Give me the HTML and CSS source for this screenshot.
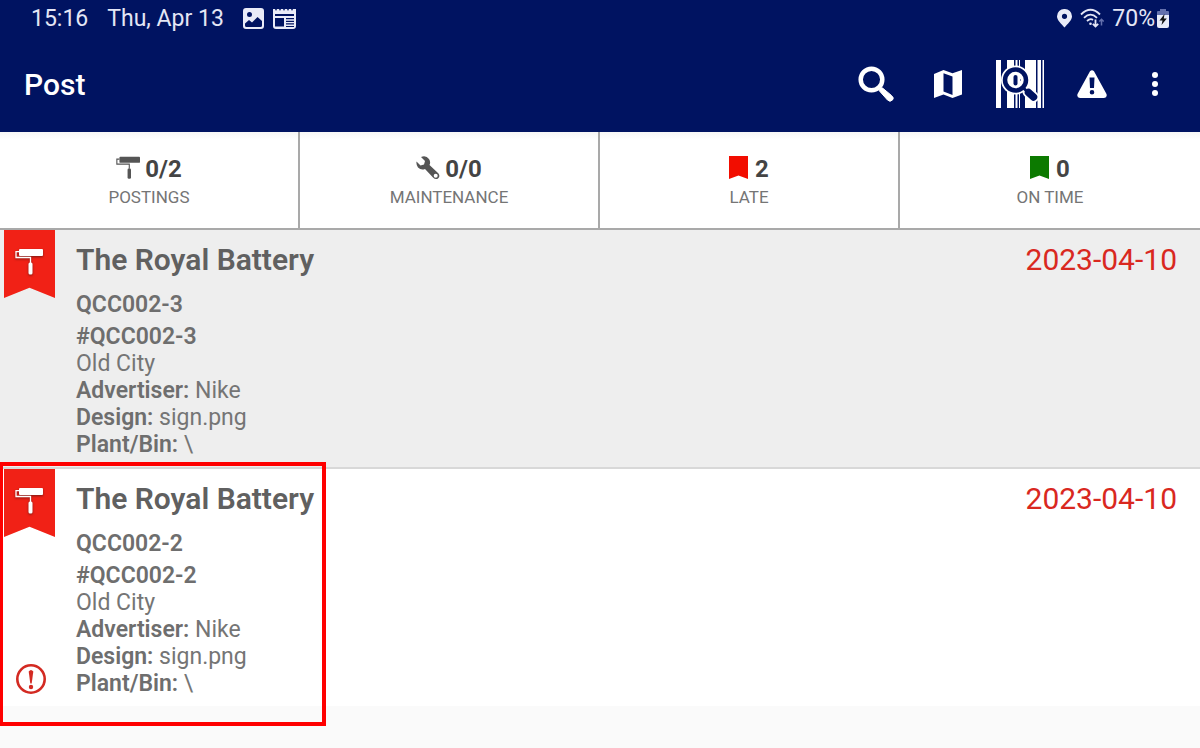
FILE: index.html
```html
<!DOCTYPE html>
<html lang="en">
<head>
    <meta charset="UTF-8">
    <meta name="viewport" content="width=device-width, initial-scale=1.0">
    <title>Post</title>
    <link rel="stylesheet" href="styles.css">
</head>
<body>

    <!-- Shared icons -->
    <svg class="sprite" aria-hidden="true">
        <symbol id="roller" viewBox="0 0 28 28">
            <rect x="4" y="1" width="24" height="7" rx="1"/>
            <path d="M4 3.700H1V9.500H15.500V15" fill="none" stroke="currentColor" stroke-width="1.300"/>
            <rect x="13.500" y="14.500" width="4" height="12" rx="1.500"/>
        </symbol>
        <symbol id="flag" viewBox="0 0 19 23">
            <path d="M0 0H19V23L9.500 19.500L0 23Z"/>
        </symbol>
    </svg>

    <header>
        <div class="status-bar">
            <div class="status-left">
                <span>15:16</span>
                <span>Thu, Apr 13</span>
                <svg class="status-icon" width="21" height="21" viewBox="0 0 21 21">
                    <path fill-rule="evenodd" d="M3 0H18Q21 0 21 3V18Q21 21 18 21H3Q0 21 0 18V3Q0 0 3 0ZM6.500 4A2.500 2.500 0 1 0 6.500 9A2.500 2.500 0 1 0 6.500 4ZM2 17.500Q2 19 3.500 19H17.500Q19 19 19 17.500V13L14.500 9L9 14.500L6 12L2 15.500Z"/>
                </svg>
                <svg class="status-icon" width="23" height="21" viewBox="0 0 23 21">
                    <path fill-rule="evenodd" d="M0 1H2L3 3L4 1H6L7 3L8 1H10L11 3L12 1H14L15 3L16 1H18L19 3L20 1H23V18Q23 21 20 21H3Q0 21 0 18ZM2 6V8H21V6ZM2 10V18.500H11V10ZM13 10V11.300H21V10ZM13 12.700V14H21V12.700ZM13 15.300V16.600H21V15.300ZM13 18V19H21V18Z"/>
                </svg>
            </div>
            <div class="status-right">
                <svg class="status-icon" width="15" height="19" viewBox="0 0 15 19">
                    <path fill-rule="evenodd" d="M7.500 0A7.300 7.300 0 0 1 15 7.300C15 11.500 10.500 15 7.500 18.500C4.500 15 0 11.500 0 7.300A7.300 7.300 0 0 1 7.500 0ZM7.500 4.700A2.600 2.600 0 1 0 7.500 9.900A2.600 2.600 0 1 0 7.500 4.700Z"/>
                </svg>
                <svg width="24" height="20" viewBox="0 0 24 20" fill="none" stroke="#e4e6f5" stroke-width="1.800">
                    <path d="M1 6.500Q10.500 -3 20 6.500M4 9.800Q10.500 3.500 17 9.800M7 13Q10.500 10 13 12"/>
                    <circle cx="10.500" cy="15.800" r="1.300" fill="#e4e6f5" stroke="none"/>
                    <path d="M15.500 11.500V18.500M12.800 15.800L15.500 18.500L18.200 15.800"/>
                    <path d="M21.500 17.500V11.500M19.300 13.500L21.500 11.300L23.700 13.500" stroke="#6470ad" stroke-width="1.500"/>
                </svg>
                <span>70%</span>
                <svg width="12" height="19" viewBox="0 0 12 19">
                    <path d="M3 0H9V2H11Q12 2 12 3V8H0V3Q0 2 1 2H3Z" fill="#6470ad"/>
                    <path d="M0 6H12V17Q12 19 10 19H2Q0 19 0 17Z" fill="#e9ebf8"/>
                    <path d="M7.500 5L2.500 11.500H5.500L4.500 16L9.800 9.500H6.800Z" fill="#111"/>
                </svg>
            </div>
        </div>

        <div class="app-bar">
            <h1>Post</h1>
            <nav class="actions">
                <button type="button" aria-label="Search">
                    <svg width="36" height="36" viewBox="0 0 36 36">
                        <circle cx="13.500" cy="13.500" r="10.800" fill="none" stroke="#fff" stroke-width="4.500"/>
                        <path d="M21.500 25Q21.500 22 24.500 22L33.500 29.500Q36.500 32 34.500 34Q32 36.500 29.500 34Z" fill="#fff" stroke="#fff"/>
                        <path d="M20 20L24 24" stroke="#fff" stroke-width="3"/>
                    </svg>
                </button>
                <button type="button" aria-label="Map">
                    <svg width="28" height="28" viewBox="0 0 28 28">
                        <path fill="#fff" fill-rule="evenodd" d="M0 4L9.500 0L18.500 3.200L28 0V24.500L18.500 28L9.500 24.500L0 28ZM9.500 3.200V21.500L18.500 25V6.500Z"/>
                    </svg>
                </button>
                <button type="button" aria-label="Scan barcode">
                    <svg width="48" height="48" viewBox="0 0 48 48">
                        <path fill="#fff" d="M0 0H5V48H0ZM11 0H18V48H11ZM19.500 0H21.500V48H19.500ZM23 0H24V48H23ZM29 0H40V48H29ZM41.500 0H45V48H41.500ZM46.500 0H48V48H46.500Z"/>
                        <path d="M32 32L37.500 37" stroke="#fff" stroke-width="11" stroke-linecap="round"/>
                        <circle cx="19.500" cy="20" r="14.500" fill="#fff"/>
                        <circle cx="19.500" cy="20" r="10.500" fill="#fff" stroke="#001361" stroke-width="4.500"/>
                        <path d="M27 27.500L32 32.500" stroke="#001361" stroke-width="3"/>
                        <path d="M32.500 32.500L37.500 37" stroke="#001361" stroke-width="7.500" stroke-linecap="round"/>
                        <rect x="17.500" y="15" width="4" height="10.500" rx="2" fill="#001361"/>
                        <path d="M24.500 19V21" stroke="#8890b8" stroke-width="1"/>
                    </svg>
                </button>
                <button type="button" aria-label="Alerts">
                    <svg width="30" height="28" viewBox="0 0 30 28">
                        <path fill="#fff" fill-rule="evenodd" d="M13 1.300Q15 -1 17 1.300L29.500 24Q30.500 27.500 27 28H3Q-.5 27.500 .5 24ZM12.500 7.500L13 18H17L17.500 7.500ZM15 20A2.300 2.300 0 1 0 15 24.600A2.300 2.300 0 1 0 15 20Z"/>
                    </svg>
                </button>
                <button type="button" class="more" aria-label="More options">
                    <svg width="6" height="24" viewBox="0 0 6 24" fill="#fff">
                        <circle cx="3" cy="3" r="3"/>
                        <circle cx="3" cy="12" r="3"/>
                        <circle cx="3" cy="21" r="3"/>
                    </svg>
                </button>
            </nav>
        </div>
    </header>

    <!-- Totals -->
    <section class="stats">
        <div class="stat">
            <p class="count"><svg width="24" height="24"><use href="#roller"/></svg>0/2</p>
            <p class="label">POSTINGS</p>
        </div>
        <div class="stat">
            <p class="count">
                <svg width="24" height="24" viewBox="0 0 24 24">
                    <path fill-rule="evenodd" d="M5 1Q10 -1 13 3Q15 6 13.500 9L22.500 17.500Q24.500 20.500 22 22.500Q19.500 24 17 21.500L9 13Q5 14.500 2 11.500Q0 9 .5 5.500L4.500 9.500L8 8.500L9 5ZM19.700 17.800A2 2 0 1 0 19.700 21.800A2 2 0 1 0 19.700 17.800Z"/>
                </svg>0/0
            </p>
            <p class="label">MAINTENANCE</p>
        </div>
        <div class="stat">
            <p class="count flagged"><svg class="late" width="19" height="23"><use href="#flag"/></svg>2</p>
            <p class="label">LATE</p>
        </div>
        <div class="stat">
            <p class="count flagged"><svg class="on-time" width="19" height="23"><use href="#flag"/></svg>0</p>
            <p class="label">ON TIME</p>
        </div>
    </section>

    <!-- Work orders -->
    <main>
        <article class="order shaded">
            <div class="side">
                <div class="ribbon"><svg width="28" height="28"><use href="#roller"/></svg></div>
            </div>
            <div class="info">
                <div class="title-row">
                    <h2>The Royal Battery</h2>
                    <time datetime="2023-04-10">2023-04-10</time>
                </div>
                <p class="code"><b>QCC002-3</b></p>
                <p><b>#QCC002-3</b></p>
                <p>Old City</p>
                <p><b>Advertiser:</b> Nike</p>
                <p><b>Design:</b> sign.png</p>
                <p><b>Plant/Bin:</b> \</p>
            </div>
        </article>

        <article class="order">
            <div class="side">
                <div class="ribbon"><svg width="28" height="28"><use href="#roller"/></svg></div>
                <svg class="alert" width="30" height="30" viewBox="0 0 30 30">
                    <circle cx="15" cy="15" r="13.700" fill="none" stroke="#d32a22" stroke-width="2.600"/>
                    <path d="M12.700 7.500Q15 4.500 17.300 7.500L15.700 19.500H14.300Z" fill="#d32a22"/>
                    <circle cx="15" cy="23" r="2.200" fill="#d32a22"/>
                </svg>
            </div>
            <div class="info">
                <div class="title-row">
                    <h2>The Royal Battery</h2>
                    <time datetime="2023-04-10">2023-04-10</time>
                </div>
                <p class="code"><b>QCC002-2</b></p>
                <p><b>#QCC002-2</b></p>
                <p>Old City</p>
                <p><b>Advertiser:</b> Nike</p>
                <p><b>Design:</b> sign.png</p>
                <p><b>Plant/Bin:</b> \</p>
            </div>
            <div class="highlight"></div>
        </article>
    </main>

</body>
</html>
```
FILE: styles.css
```css
* {
    box-sizing: border-box;
}

body {
    min-height: 100vh;
    margin: 0;
    background-color: #fafafa;
    font-family: Roboto, "Liberation Sans", sans-serif;
    color: #757575;
}

h1, h2, p {
    margin: 0;
}

svg {
    display: block;
    flex: none;
}

.sprite {
    position: absolute;
    width: 0;
    height: 0;
}

/* Header */
header {
    background-color: #001361;
    color: #fff;
}

.status-bar {
    display: flex;
    justify-content: space-between;
    height: 36px;
    padding: 0 31px;
    font-size: 23px;
    color: #e4e6f5;
}

.status-left,
.status-right {
    display: flex;
    align-items: center;
}

.status-left {
    gap: 19px;
}

.status-left svg + svg {
    margin-left: -10px;
}

.status-right {
    gap: 8px;
}

.status-right span + svg {
    margin-left: -6px;
}

.status-icon {
    fill: #e9ebf8;
}

.app-bar {
    display: flex;
    align-items: center;
    justify-content: space-between;
    height: 96px;
    padding: 0 18px 0 24px;
}

h1 {
    font-size: 30px;
    font-weight: 500;
}

.actions {
    display: flex;
}

.actions button {
    display: flex;
    align-items: center;
    justify-content: center;
    width: 72px;
    height: 72px;
    padding: 0;
    border: none;
    background: none;
    cursor: pointer;
}

.actions .more {
    width: 54px;
}

/* Totals */
.stats {
    display: grid;
    grid-template-columns: repeat(4, 1fr);
    background: linear-gradient(#f6f6f6, #fff 8px);
    border-bottom: 2px solid #a9a9a9;
}

.stat {
    height: 96px;
    padding-top: 22px;
    border-right: 2px solid #a9a9a9;
    text-align: center;
}

.stat:last-child {
    border-right: none;
}

.count {
    display: flex;
    justify-content: center;
    gap: 5px;
    font-size: 24px;
    font-weight: 700;
    line-height: 31px;
    color: #444;
}

.count svg {
    margin-top: 2px;
    fill: #555;
    color: #555;
}

.flagged {
    gap: 7px;
}

.count .late {
    fill: #f20d00;
}

.count .on-time {
    fill: #0c7a00;
}

.label {
    font-size: 17px;
    line-height: 24px;
}

/* Work orders */
.order {
    position: relative;
    display: flex;
    background-color: #fff;
}

.shaded {
    background-color: #eee;
    border-bottom: 2px solid #d8d8d8;
}

.side {
    display: flex;
    flex-direction: column;
    justify-content: space-between;
    width: 76px;
    padding: 0 0 12px 4px;
}

.ribbon {
    width: 51px;
    height: 68px;
    padding: 18px 11px;
    background-color: #f12116;
    clip-path: polygon(0 0, 100% 0, 100% 100%, 50% 85%, 0 100%);
    color: #fff;
}

.ribbon svg {
    fill: #fff;
    filter: drop-shadow(0 1px 1px #7a1a14);
}

.alert {
    margin-left: 12px;
}

.info {
    flex: 1;
    padding: 12px 23px 9px 0;
    font-size: 23px;
    line-height: 27px;
}

.info b {
    font-weight: 600;
    color: #6e6e6e;
}

.title-row {
    display: flex;
    justify-content: space-between;
    margin-bottom: 13px;
    font-size: 30px;
    line-height: 36px;
}

h2 {
    font-size: 30px;
    font-weight: 600;
    color: #606060;
}

time {
    color: #d9281f;
}

.code {
    margin-bottom: 5px;
}

.highlight {
    position: absolute;
    top: -7px;
    bottom: -20px;
    left: 0;
    width: 326px;
    border: 4px solid #f00;
    border-left-width: 3px;
    pointer-events: none;
}
```
